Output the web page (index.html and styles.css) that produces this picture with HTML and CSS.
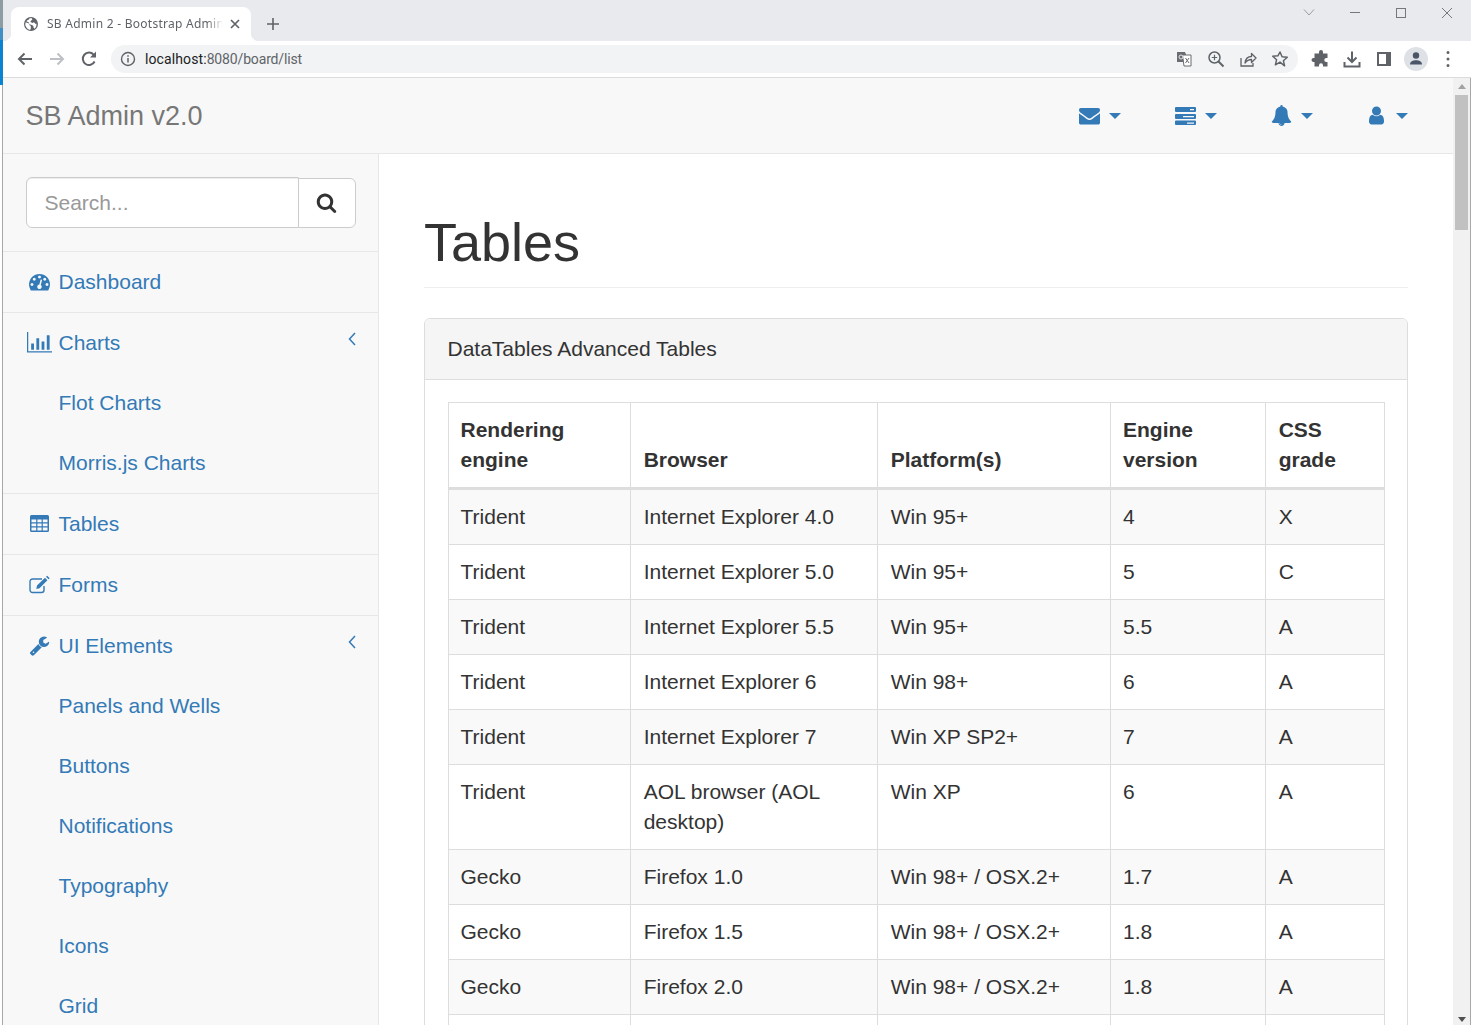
FILE: index.html
```html
<!DOCTYPE html>
<html lang="en">
<head>
<meta charset="utf-8">
<title>SB Admin 2 - Bootstrap Admin Theme</title>
<link rel="stylesheet" href="styles.css">
</head>
<body>
<div class="edge"></div>
<div class="window">
  <div class="tabstrip">
    <div class="tab">
      <svg class="favicon" viewBox="0 0 16 16"><path fill="#5f6368" fill-rule="evenodd" d="M8 1a7 7 0 1 0 0 14A7 7 0 0 0 8 1zM2.6 6.2 6 7.5l.4 1.6 1.4 1v2.6L7 14A6 6 0 0 1 2.6 6.2zM8.5 2.1l.9 1.4-1.7 1.4-.2 1.2 2 .8 1.5-.6 1.7 1.7.9-.2a6 6 0 0 1-2.2 5l-1-1.6V10L9 9 6.3 8.2 5.9 6.5 3.5 5.3 4 4.3 5.5 4l.5-1.3a6 6 0 0 1 2.5-.6z"/></svg>
      <span class="tab-title">SB Admin 2 - Bootstrap Admin</span>
      <svg class="tab-close" viewBox="0 0 10 10"><path d="M1 1l8 8M9 1l-8 8" stroke="#5f6368" stroke-width="1.7" fill="none"/></svg>
    </div>
    <svg class="new-tab" viewBox="0 0 12 12"><path d="M6 0v12M0 6h12" stroke="#5f6368" stroke-width="1.6" fill="none"/></svg>
    <div class="win-controls">
      <svg class="win-btn" viewBox="0 0 46 14"><path d="M18 3.5l5 5.5 5-5.5" stroke="#9a9ca0" fill="none"/></svg>
      <svg class="win-btn" viewBox="0 0 46 14"><path d="M18 6.5h10" stroke="#777" fill="none"/></svg>
      <svg class="win-btn" viewBox="0 0 46 14"><rect x="18.5" y="2.5" width="9" height="9" stroke="#777" fill="none"/></svg>
      <svg class="win-btn" viewBox="0 0 46 14"><path d="M18 2l10 10M28 2L18 12" stroke="#777" fill="none"/></svg>
    </div>
  </div>
  <div class="toolbar">
    <span class="tool"><svg class="ticon" viewBox="0 0 20 20"><path d="M17 10H4M9.5 4.5 4 10l5.5 5.5" stroke="#5f6368" stroke-width="2" fill="none"/></svg></span>
    <span class="tool"><svg class="ticon" viewBox="0 0 20 20"><path d="M3 10h13M10.500 4.500 16 10l-5.500 5.500" stroke="#bdc1c6" stroke-width="2" fill="none"/></svg></span>
    <span class="tool"><svg class="ticon" viewBox="0 0 20 20"><path d="M15.600 12.500A6.200 6.200 0 1 1 14.600 5.600L16 7" stroke="#5f6368" stroke-width="2" fill="none"/><path d="M17 2.500V8.500H11z" fill="#5f6368"/></svg></span>
    <div class="omnibox">
      <svg class="info" viewBox="0 0 16 16"><circle cx="8" cy="8" r="6.500" stroke="#5f6368" stroke-width="1.400" fill="none"/><path d="M8 7v4.500M8 4.300v1.500" stroke="#5f6368" stroke-width="1.500"/></svg>
      <span class="url"><span class="url-host">localhost:</span>8080/board/list</span>
      <span class="omni-icons">
        <span class="tool"><svg class="ticon" viewBox="0 0 20 20"><path d="M3 3h8l1 2.500V13H3z" fill="#696c70"/><path d="M8.500 6h8.500v11H10z" fill="#fff" stroke="#696c70"/><circle cx="7" cy="8" r="2" fill="none" stroke="#e8eaed"/><path d="M11.500 9l3.500 5M15 9l-3.500 5" stroke="#696c70"/></svg></span>
        <span class="tool"><svg class="ticon" viewBox="0 0 20 20"><circle cx="8.500" cy="8.500" r="5.500" stroke="#5f6368" stroke-width="1.500" fill="none"/><path d="M12.500 12.500l5 5" stroke="#5f6368" stroke-width="2"/><path d="M8.500 5.800v5.400M5.800 8.500h5.400" stroke="#5f6368" stroke-width="1.200"/></svg></span>
        <span class="tool"><svg class="ticon" viewBox="0 0 20 20"><path d="M3 9v8h12v-3" stroke="#5f6368" stroke-width="1.300" fill="none"/><path d="M7 14c.5-4 3-6.500 6.500-6.500V4.500L18 9l-4.500 4.500v-3C11 10.500 8.500 12 7 14z" stroke="#5f6368" stroke-width="1.300" fill="none" stroke-linejoin="round"/></svg></span>
        <span class="tool"><svg class="ticon" viewBox="0 0 20 20"><path d="M10 3l2.100 4.800 5.200.5-3.900 3.400 1.200 5.100L10 13.100l-4.600 2.700 1.200-5.100-3.900-3.400 5.200-.5z" stroke="#5f6368" stroke-width="1.500" fill="none" stroke-linejoin="round"/></svg></span>
      </span>
    </div>
    <div class="tool-group">
      <span class="tool"><svg class="ticon" viewBox="0 0 20 20"><path fill="#5f6368" d="M9 3a2 2 0 0 1 4 0v1.500h4.500V9h-1.200a2 2 0 0 0 0 4h1.200v4.500H13v-1.200a2 2 0 0 0-4 0v1.200H4.500V13H3.500a2 2 0 0 1 0-4h1V4.500H9z"/></svg></span>
      <span class="tool"><svg class="ticon" viewBox="0 0 20 20"><path d="M10 2.500v10M5.500 8.500l4.500 4.500 4.500-4.500M2.500 13v4.500h15V13" stroke="#5f6368" stroke-width="2" fill="none"/></svg></span>
      <span class="tool"><svg class="ticon" viewBox="0 0 20 20"><path fill="#5f6368" fill-rule="evenodd" d="M3 3h14v14H3zM5 5v10h7V5z"/></svg></span>
      <span class="tool"><span class="avatar"><svg class="ticon" viewBox="0 0 20 20"><circle cx="10" cy="6.500" r="3.200" fill="#4a5568"/><path d="M4 15.500c0-3 3-4.300 6-4.300s6 1.300 6 4.300z" fill="#4a5568"/></svg></span></span>
      <span class="tool"><svg class="ticon" viewBox="0 0 20 20"><path d="M10 3.500v.1M10 10v.1M10 16.500v.1" stroke="#5f6368" stroke-width="3" stroke-linecap="round"/></svg></span>
    </div>
  </div>
  <div class="viewport">
    <div class="page">
      <nav class="navbar">
        <a class="brand">SB Admin v2.0</a>
        <ul class="nav-top">
          <li class="nav-top-item"><svg class="nav-icon" viewBox="0 0 1792 1792"><path d="M1792 710v794q0 66-47 113t-113 47h-1472q-66 0-113-47t-47-113v-794q44 49 101 87 362 246 497 345 57 42 92.500 65.500t94.500 48 110 24.500h2q51 0 110-24.500t94.500-48 92.500-65.500q170-123 498-345 57-39 100-87zm0-294q0 79-49 151t-122 123q-376 261-468 325-10 7-42.500 30.500t-54 38-52 32.500-57.500 27-50 9h-2q-23 0-50-9t-57.500-27-52-32.500-54-38-42.500-30.500q-91-64-262-182.500t-205-142.500q-62-42-117-115.500t-55-136.500q0-78 41.500-130t118.500-52h1472q65 0 112.500 47t47.500 113z"/></svg><span class="caret"></span></li>
          <li class="nav-top-item"><svg class="nav-icon" viewBox="0 0 21 21"><path fill-rule="evenodd" d="M1 2h19a1 1 0 0 1 1 1v3a1 1 0 0 1-1 1H1a1 1 0 0 1-1-1V3a1 1 0 0 1 1-1zM15 4v1.200h4V4zM1 9h19a1 1 0 0 1 1 1v3a1 1 0 0 1-1 1H1a1 1 0 0 1-1-1v-3a1 1 0 0 1 1-1zM8 11v1.200h11V11zM1 15.500h19a1 1 0 0 1 1 1v2.500a1 1 0 0 1-1 1H1a1 1 0 0 1-1-1v-2.500a1 1 0 0 1 1-1zM12 17.500v1.200h7v-1.200z"/></svg><span class="caret"></span></li>
          <li class="nav-top-item"><svg class="nav-icon" viewBox="0 0 1792 1792"><path d="M912 1696q0-16-16-16-59 0-101.500-42.500t-42.500-101.500q0-16-16-16t-16 16q0 73 51.500 124.500t124.500 51.500q16 0 16-16zm816-288q0 52-38 90t-90 38h-448q0 106-75 181t-181 75-181-75-75-181h-448q-52 0-90-38t-38-90q50-42 91-88t85-119.500 74.500-158.500 50-206 19.500-260q0-152 117-282.500t307-158.500q-8-19-8-39 0-40 28-68t68-28 68 28 28 68q0 20-8 39 190 28 307 158.500t117 282.500q0 139 19.500 260t50 206 74.500 158.500 85 119.500 91 88z"/></svg><span class="caret"></span></li>
          <li class="nav-top-item"><svg class="nav-icon" viewBox="0 0 1792 1792"><path d="M1536 1399q0 109-62.500 187t-150.500 78h-854q-88 0-150.500-78t-62.500-187q0-85 8.500-160.500t31.500-152 58.500-131 94-89 134.500-34.500q131 128 313 128t313-128q76 0 134.500 34.500t94 89 58.500 131 31.500 152 8.500 160.500zm-256-887q0 159-112.500 271.500t-271.500 112.500-271.500-112.500-112.500-271.500 112.500-271.500 271.500-112.500 271.500 112.500 112.500 271.500z"/></svg><span class="caret"></span></li>
        </ul>
      </nav>
      <div class="layout">
        <aside class="sidebar">
          <ul class="side-menu">
            <li class="side-search">
              <div class="input-group">
                <input class="search-input" type="text" placeholder="Search...">
                <button class="search-btn" type="button"><svg class="search-icon" viewBox="0 0 1792 1792"><path d="M1216 832q0-185-131.500-316.500t-316.500-131.500-316.500 131.500-131.500 316.500 131.500 316.500 316.500 131.500 316.500-131.500 131.500-316.500zm512 832q0 52-38 90t-90 38q-54 0-90-38l-343-342q-179 124-399 124-143 0-273.500-55.500t-225-150-150-225-55.500-273.500 55.500-273.500 150-225 225-150 273.500-55.500 273.500 55.500 225 150 150 225 55.500 273.500q0 220-124 399l343 343q37 37 37 90z"/></svg></button>
              </div>
            </li>
            <li class="side-item"><a class="side-link"><span class="fw"><svg class="side-icon" viewBox="0 0 1792 1792"><path d="M384 1152q0-53-37.500-90.500t-90.500-37.500-90.500 37.500-37.500 90.500 37.500 90.500 90.500 37.500 90.500-37.500 37.500-90.500zm192-448q0-53-37.500-90.500t-90.500-37.500-90.500 37.500-37.500 90.500 37.500 90.500 90.500 37.500 90.500-37.500 37.500-90.500zm428 481l101-382q6-26-7.500-48.500t-38.500-29.500-48 6.500-30 39.500l-101 382q-60 5-107 43.500t-63 98.500q-20 77 20 146t117 89 146-20 89-117q16-60-6-117t-72-91zm660-33q0-53-37.500-90.500t-90.500-37.500-90.500 37.500-37.500 90.500 37.500 90.500 90.500 37.500 90.500-37.500 37.500-90.500zm-640-640q0-53-37.500-90.500t-90.500-37.500-90.500 37.500-37.500 90.500 37.500 90.500 90.500 37.500 90.500-37.500 37.500-90.500zm448 192q0-53-37.500-90.500t-90.500-37.500-90.500 37.500-37.500 90.500 37.500 90.500 90.500 37.500 90.500-37.500 37.500-90.500zm320 448q0 261-141 483-19 29-54 29h-1402q-35 0-54-29-141-221-141-483 0-182 71-348t191-286 286-191 348-71 348 71 286 191 191 286 71 348z"/></svg></span>Dashboard</a></li>
            <li class="side-item"><a class="side-link"><span class="fw"><svg class="side-icon wide" viewBox="0 0 24 20"><path d="M0 0h1.200v18.500H24v1.200H0z"/><path d="M4 11h2.700v6H4zM9 6h2.700v11H9zM14 9h2.700v8H14zM19 3h2.700v14H19z"/></svg></span>Charts<svg class="arrow" viewBox="0 0 8 14"><path d="M7 1 1.500 7 7 13" stroke="#337ab7" stroke-width="1.500" fill="none"/></svg></a>
              <ul class="side-sub">
                <li><a class="sub-link">Flot Charts</a></li>
                <li><a class="sub-link">Morris.js Charts</a></li>
              </ul>
            </li>
            <li class="side-item"><a class="side-link"><span class="fw"><svg class="side-icon" viewBox="0 0 21 21"><path fill-rule="evenodd" d="M2.500 2h16A1.500 1.500 0 0 1 20 3.500v14a1.500 1.500 0 0 1-1.500 1.500h-16A1.500 1.500 0 0 1 1 17.500v-14A1.500 1.500 0 0 1 2.500 2zM2.500 6.500v2.800h4.700V6.500zM8.400 6.500v2.800h4.200V6.500zM13.800 6.500v2.800h4.700V6.500zM2.500 10.500v2.800h4.700v-2.800zM8.400 10.500v2.800h4.200v-2.800zM13.800 10.500v2.800h4.700v-2.800zM2.500 14.500v3h4.700v-3zM8.400 14.500v3h4.200v-3zM13.800 14.500v3h4.700v-3z"/></svg></span>Tables</a></li>
            <li class="side-item"><a class="side-link"><span class="fw"><svg class="side-icon" viewBox="0 0 21 21"><path d="M15 12v4a2.500 2.500 0 0 1-2.500 2.500h-9A2.500 2.500 0 0 1 1 16V7.500A2.500 2.500 0 0 1 3.500 5H13" fill="none" stroke="#337ab7" stroke-width="1.400"/><path d="M8 11.500 16 3.800l2.400 2.400-7.900 8-3.200.8zM17 2.800l1.200-1.100 2.500 2.500-1.200 1.100z"/></svg></span>Forms</a></li>
            <li class="side-item"><a class="side-link"><span class="fw"><svg class="side-icon" viewBox="0 0 1792 1792"><path d="M448 1472q0-26-19-45t-45-19-45 19-19 45 19 45 45 19 45-19 19-45zm644-420l-682 682q-37 37-90 37-52 0-91-37l-106-108q-38-36-38-90 0-53 38-91l681-681q39 98 114.500 173.500t173.500 114.500zm634-435q0 39-23 106-47 134-164.500 217.500t-258.500 83.500q-185 0-316.500-131.500t-131.500-316.500 131.500-316.500 316.500-131.500q58 0 121.500 16.500t107.500 46.500q16 11 16 28t-16 28l-293 169v224l193 107q5-3 79-48.500t135.500-81 70.500-35.500q15 0 23.500 10t8.500 25z"/></svg></span>UI Elements<svg class="arrow" viewBox="0 0 8 14"><path d="M7 1 1.500 7 7 13" stroke="#337ab7" stroke-width="1.500" fill="none"/></svg></a>
              <ul class="side-sub">
                <li><a class="sub-link">Panels and Wells</a></li>
                <li><a class="sub-link">Buttons</a></li>
                <li><a class="sub-link">Notifications</a></li>
                <li><a class="sub-link">Typography</a></li>
                <li><a class="sub-link">Icons</a></li>
                <li><a class="sub-link">Grid</a></li>
              </ul>
            </li>
          </ul>
        </aside>
        <main class="content">
          <h1 class="page-header">Tables</h1>
          <section class="panel">
            <div class="panel-heading">DataTables Advanced Tables</div>
            <div class="panel-body">
              <table class="data-table">
                <colgroup>
                  <col class="c1"><col class="c2"><col class="c3"><col class="c4"><col class="c5">
                </colgroup>
                <thead>
                  <tr><th>Rendering engine</th><th>Browser</th><th>Platform(s)</th><th>Engine version</th><th>CSS grade</th></tr>
                </thead>
                <tbody>
                  <tr><td>Trident</td><td>Internet Explorer 4.0</td><td>Win 95+</td><td>4</td><td>X</td></tr>
                  <tr><td>Trident</td><td>Internet Explorer 5.0</td><td>Win 95+</td><td>5</td><td>C</td></tr>
                  <tr><td>Trident</td><td>Internet Explorer 5.5</td><td>Win 95+</td><td>5.5</td><td>A</td></tr>
                  <tr><td>Trident</td><td>Internet Explorer 6</td><td>Win 98+</td><td>6</td><td>A</td></tr>
                  <tr><td>Trident</td><td>Internet Explorer 7</td><td>Win XP SP2+</td><td>7</td><td>A</td></tr>
                  <tr><td>Trident</td><td>AOL browser (AOL desktop)</td><td>Win XP</td><td>6</td><td>A</td></tr>
                  <tr><td>Gecko</td><td>Firefox 1.0</td><td>Win 98+ / OSX.2+</td><td>1.7</td><td>A</td></tr>
                  <tr><td>Gecko</td><td>Firefox 1.5</td><td>Win 98+ / OSX.2+</td><td>1.8</td><td>A</td></tr>
                  <tr><td>Gecko</td><td>Firefox 2.0</td><td>Win 98+ / OSX.2+</td><td>1.8</td><td>A</td></tr>
                  <tr><td>&nbsp;</td><td>&nbsp;</td><td>&nbsp;</td><td>&nbsp;</td><td>&nbsp;</td></tr>
                </tbody>
              </table>
            </div>
          </section>
        </main>
      </div>
    </div>
    <div class="scrollbar">
      <span class="sb-up"></span>
      <span class="sb-thumb"></span>
      <span class="sb-down"></span>
    </div>
    <div class="right-edge"></div>
  </div>
</div>
</body>
</html>
```
FILE: styles.css
```css
* { box-sizing: border-box; }
html, body { height: 100%; }
body {
  margin: 0;
  display: flex;
  height: 1025px;
  overflow: hidden;
  background: #fff;
  color: #333;
  font-family: "Liberation Sans", Arial, sans-serif;
  font-size: 21px;
  line-height: 30px;
}
ul { list-style: none; margin: 0; padding: 0; }
a { color: #337ab7; text-decoration: none; }

.edge {
  width: 3px;
  flex: none;
  background:
    linear-gradient(to right, #fff 0 2px, #a8a8a8 2px 3px) 0 85px no-repeat,
    linear-gradient(to bottom, #8d9ba3 0 28px, #3f8fc4 28px 40px, #0a84d0 40px 85px, #fff 85px);
}
.window { flex: 1; min-width: 0; display: flex; flex-direction: column; }

/* tab strip */
.tabstrip {
  height: 41px;
  flex: none;
  background: #e8eaed;
  display: flex;
  align-items: flex-end;
  padding-left: 8px;
}
.tab {
  position: relative;
  width: 240px;
  height: 34px;
  background: #fff;
  border-radius: 8px 8px 0 0;
  display: flex;
  align-items: center;
  padding: 0 10px 0 12px;
  flex: none;
}
.tab::before, .tab::after {
  content: "";
  position: absolute;
  bottom: 0;
  width: 8px;
  height: 8px;
}
.tab::before { left: -8px; background: radial-gradient(circle at 0 0, transparent 8px, #fff 8.500px); }
.tab::after { right: -8px; background: radial-gradient(circle at 100% 0, transparent 8px, #fff 8.500px); }
.favicon { width: 16px; height: 16px; flex: none; margin-right: 8px; }
.tab-title {
  flex: 1;
  min-width: 0;
  white-space: nowrap;
  font-family: "Noto Sans", sans-serif;
  font-size: 12px;
  line-height: 18px;
  color: #5f6368;
  letter-spacing: .26px;
  -webkit-mask-image: linear-gradient(to right, #000 160px, transparent 176px);
  mask-image: linear-gradient(to right, #000 160px, transparent 176px);
}
.tab-close { width: 10px; height: 10px; flex: none; margin-left: 4px; margin-right: 1px; }
.new-tab { width: 12px; height: 12px; flex: none; margin-left: 16px; margin-bottom: 11px; }
.win-controls { margin-left: auto; align-self: flex-start; display: flex; padding-top: 6px; padding-right: 1px; }
.win-btn { width: 46px; height: 14px; display: block; }

/* toolbar */
.toolbar {
  height: 37px;
  flex: none;
  background: #fff;
  border-bottom: 1px solid #dadce0;
  display: flex;
  align-items: center;
  padding: 0 7px 1px 6px;
}
.tool { width: 32px; height: 28px; flex: none; display: flex; align-items: center; justify-content: center; }
.ticon { width: 20px; height: 20px; display: block; }
.omnibox {
  flex: 1;
  min-width: 0;
  height: 28px;
  margin: 0 6px;
  border-radius: 14px;
  background: #f1f3f4;
  display: flex;
  align-items: center;
  padding: 0 2px 0 9px;
}
.info { width: 16px; height: 16px; flex: none; margin-right: 9px; }
.url { font-family: "Roboto", sans-serif; font-size: 14px; line-height: 20px; color: #5f6368; letter-spacing: -.15px; }
.url-host { color: #202124; letter-spacing: .1px; }
.omni-icons { margin-left: auto; display: flex; }
.tool-group { display: flex; }
.avatar { width: 24px; height: 24px; border-radius: 50%; background: #dee1e6; display: flex; align-items: center; justify-content: center; }

/* viewport */
.viewport { flex: 1; min-height: 0; display: flex; }
.page { flex: 1; min-width: 0; overflow: hidden; }
.scrollbar {
  width: 17px;
  flex: none;
  background: #f1f1f1;
  display: flex;
  flex-direction: column;
  align-items: center;
}
.sb-up {
  margin-top: 6px;
  width: 0; height: 0;
  border: 4px solid transparent;
  border-top: 0;
  border-bottom: 5px solid #a3a3a3;
}
.sb-thumb { width: 13px; height: 135px; margin-top: 6px; background: #c1c1c1; }
.sb-down {
  margin-top: auto;
  margin-bottom: 3px;
  width: 0; height: 0;
  border: 4px solid transparent;
  border-bottom: 0;
  border-top: 5px solid #505050;
}
.right-edge { width: 1px; flex: none; background: #a8a8a8; }

/* navbar */
.navbar {
  height: 76px;
  background: #f8f8f8;
  border-bottom: 1px solid #e7e7e7;
  display: flex;
  align-items: center;
  padding: 0 45px 0 22.500px;
}
.brand { font-size: 27px; line-height: 30px; color: #777; }
.nav-top { margin-left: auto; display: flex; gap: 54px; }
.nav-top-item { display: flex; align-items: center; }
.nav-top-item:last-child { margin-left: -.670px; }
.nav-icon { width: 21px; height: 21px; fill: #337ab7; display: block; margin-right: 9px; }
.caret {
  width: 0; height: 0;
  border-left: 6px solid transparent;
  border-right: 6px solid transparent;
  border-top: 6px solid #337ab7;
}

/* layout */
.layout { display: flex; align-items: stretch; }
.sidebar { width: 376px; flex: none; background: #f8f8f8; border-right: 1px solid #e7e7e7; }
.side-search { padding: 23px 22.500px 23px; border-bottom: 1px solid #e7e7e7; }
.input-group { display: flex; height: 51px; }
.search-input {
  flex: 1;
  min-width: 0;
  height: 51px;
  border: 1px solid #ccc;
  border-radius: 6px 0 0 6px;
  padding: 0 18px;
  font-family: inherit;
  font-size: 21px;
  color: #555;
  background: #fff;
  box-shadow: inset 0 1px 1px rgba(0,0,0,.075);
  outline: 0;
}
.search-input::placeholder { color: #999; opacity: 1; }
.search-btn {
  width: 58px;
  flex: none;
  margin: 1px 0 0 -1px;
  height: 50px;
  background: #fff;
  border: 1px solid #ccc;
  border-radius: 0 6px 6px 0;
  padding: 0 0 2px;
  display: flex;
  align-items: center;
  justify-content: center;
}
.search-icon { width: 21px; height: 21px; fill: #333; display: block; }
.side-item { border-bottom: 1px solid #e7e7e7; }
.side-link { display: flex; align-items: center; height: 60px; padding: 0 22px 0 22.500px; }
.fw { width: 27px; flex: none; margin-right: 6px; margin-top: -2px; display: flex; justify-content: center; }
.side-icon { width: 21px; height: 21px; fill: #337ab7; display: block; }
.side-icon.wide { width: 25px; }
.arrow { width: 8px; height: 14px; margin-left: auto; margin-top: -9px; display: block; }
.sub-link { display: flex; align-items: center; height: 60px; padding-left: 55.500px; }

/* content */
.content { flex: 1; min-width: 0; padding: 0 45px; }
.page-header {
  margin: 59px 0 30px;
  padding-bottom: 14.500px;
  border-bottom: 1px solid #eee;
  font-size: 54px;
  font-weight: 500;
  line-height: 1.1;
  color: #333;
}
.panel { border: 1px solid #ddd; border-radius: 6px; background: #fff; }
.panel-heading {
  background: #f5f5f5;
  border-bottom: 1px solid #ddd;
  border-radius: 5px 5px 0 0;
  padding: 15px 22.500px;
}
.panel-body { padding: 22.500px 23px 22.500px 22.500px; }
.data-table { width: 100%; border-collapse: collapse; table-layout: fixed; }
.c1 { width: 182.500px; }
.c2 { width: 247px; }
.c3 { width: 233px; }
.c4 { width: 155px; }
.c5 { width: 119px; }
.data-table th, .data-table td {
  border: 1px solid #ddd;
  padding: 12px;
  text-align: left;
  vertical-align: top;
}
.data-table th + th, .data-table td + td { padding-left: 12.700px; }
.data-table th:nth-child(4), .data-table td:nth-child(4) { padding-left: 12px; }
.data-table th { vertical-align: bottom; border-bottom-width: 3px; font-weight: 700; }
.data-table tbody tr:nth-child(odd) { background: #f9f9f9; }
```
